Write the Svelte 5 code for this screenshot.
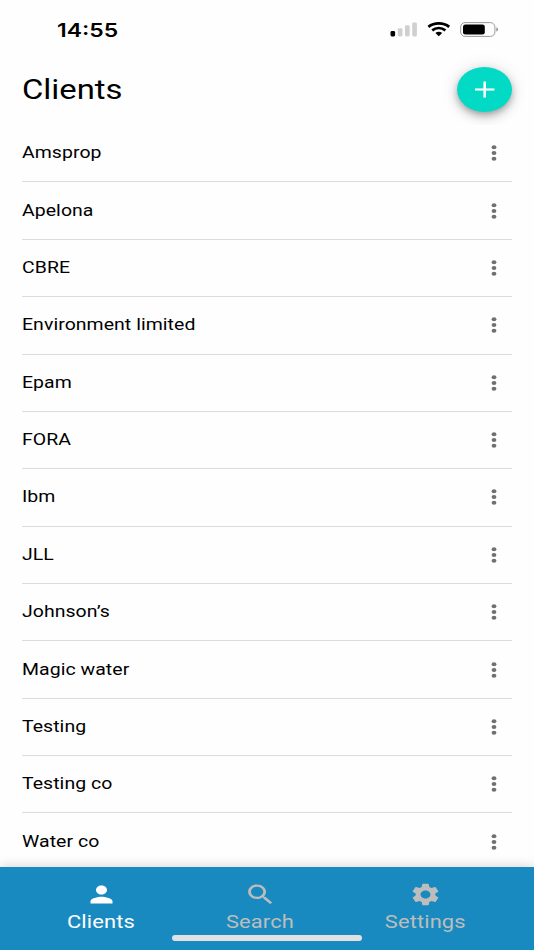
<script>
	let clients = [
		'Amsprop',
		'Apelona',
		'CBRE',
		'Environment limited',
		'Epam',
		'FORA',
		'Ibm',
		'JLL',
		'Johnson’s',
		'Magic water',
		'Testing',
		'Testing co',
		'Water co'
	];

	const tabs = [
		{
			label: 'Clients',
			icon: 'M12 12c2.21 0 4-1.79 4-4s-1.79-4-4-4-4 1.79-4 4 1.79 4 4 4zm0 2c-2.67 0-8 1.34-8 4v2h16v-2c0-2.66-5.33-4-8-4z'
		},
		{
			label: 'Search',
			icon: 'M15.5 14h-.79l-.28-.27C15.41 12.59 16 11.11 16 9.5 16 5.91 13.09 3 9.5 3S3 5.91 3 9.5 5.91 16 9.5 16c1.61 0 3.09-.59 4.23-1.57l.27.28v.79l5 4.99L20.49 19l-4.99-5zm-6 0C7.01 14 5 11.99 5 9.5S7.01 5 9.5 5 14 7.01 14 9.5 11.99 14 9.5 14z'
		},
		{
			label: 'Settings',
			icon: 'M19.14 12.94c.04-.3.06-.61.06-.94 0-.32-.02-.64-.07-.94l2.03-1.58c.18-.14.23-.41.12-.61l-1.92-3.32c-.12-.22-.37-.29-.59-.22l-2.39.96c-.5-.38-1.03-.7-1.62-.94l-.36-2.54c-.04-.24-.24-.41-.48-.41h-3.84c-.24 0-.43.17-.47.41l-.36 2.54c-.59.24-1.13.57-1.62.94l-2.39-.96c-.22-.08-.47 0-.59.22L2.74 8.87c-.12.21-.08.47.12.61l2.03 1.58c-.05.3-.09.63-.09.94s.02.64.07.94l-2.03 1.58c-.18.14-.23.41-.12.61l1.92 3.32c.12.22.37.29.59.22l2.39-.96c.5.38 1.03.7 1.62.94l.36 2.54c.05.24.24.41.48.41h3.84c.24 0 .44-.17.47-.41l.36-2.54c.59-.24 1.13-.56 1.62-.94l2.39.96c.22.08.47 0 .59-.22l1.92-3.32c.12-.22.07-.47-.12-.61l-2.01-1.58zM12 15.6c-1.98 0-3.6-1.62-3.6-3.6s1.62-3.6 3.6-3.6 3.6 1.62 3.6 3.6-1.62 3.6-3.6 3.6z'
		}
	];

	let active = 'Clients';
</script>

<div class="screen">
	<div class="status-bar">
		<span class="time">14:55</span>
		<svg class="status-icons" width="110" height="20" viewBox="0 0 110 20" aria-hidden="true">
			<rect x="0.5" y="11" width="4.6" height="5.4" rx="1.4" fill="#000" />
			<g fill="#d0d0d0">
				<rect x="7.8" y="8.3" width="4.7" height="8.1" rx="1.4" />
				<rect x="15" y="5.2" width="4.7" height="11.2" rx="1.4" />
				<rect x="22.2" y="2.4" width="4.7" height="14" rx="1.4" />
			</g>
			<g fill="none" stroke="#000" stroke-width="2.8">
				<path d="M38.4 6.8C44.3 2.2 53.3 2.2 59.2 6.8" />
				<path d="M42.2 10.3C46.2 7.3 51.4 7.3 55.4 10.3" />
			</g>
			<path d="M45.4 12.9c2-1.5 4.8-1.5 6.8 0l-3.4 3.3z" fill="#000" />
			<rect x="70.7" y="2.6" width="34.2" height="13.8" rx="4.4" fill="none" stroke="#999" />
			<rect x="73" y="4.4" width="21.8" height="10.2" rx="2.4" fill="#000" />
			<path d="M106.4 7.2c2.1.8 2.1 3.6 0 4.4z" fill="#888" />
		</svg>
	</div>

	<header>
		<h1>Clients</h1>
		<button class="fab" type="button" aria-label="Add client">
			<svg width="20" height="17" viewBox="0 0 20 17" aria-hidden="true">
				<path d="M0 8.5h19.4" stroke="#fff" stroke-width="2.1" />
				<path d="M9.7 0.5v16" stroke="#fff" stroke-width="2.6" />
			</svg>
		</button>
	</header>

	<ul>
		{#each clients as client}
			<li>
				<span class="name">{client}</span>
				<button class="more" type="button" aria-label="More">
					<svg width="6" height="16" viewBox="0 0 6 16" fill="#707070" aria-hidden="true">
						<ellipse cx="3" cy="2.3" rx="2.4" ry="2" />
						<ellipse cx="3" cy="8" rx="2.4" ry="2" />
						<ellipse cx="3" cy="13.7" rx="2.4" ry="2" />
					</svg>
				</button>
			</li>
		{/each}
	</ul>

	<nav>
		{#each tabs as tab}
			<button class="tab" type="button" class:active={active === tab.label} on:click={() => (active = tab.label)}>
				<svg width="33" height="27" viewBox="0 0 24 24" preserveAspectRatio="none" aria-hidden="true">
					<path d={tab.icon} fill="currentColor" />
				</svg>
				<span>{tab.label}</span>
			</button>
		{/each}
		<div class="home-indicator"></div>
	</nav>
</div>

<style>
	:global(body) {
		background: #fff;
		overflow: hidden;
	}
	.screen {
		width: 534px;
		height: 950px;
		display: flex;
		flex-direction: column;
		overflow: hidden;
		font-family: Roboto, sans-serif;
		color: #000;
		background: #fefefe;
	}
	button {
		border: 0;
		padding: 0;
		background: none;
		font: inherit;
		cursor: pointer;
	}
	.status-bar {
		height: 60px;
		flex: none;
		box-sizing: border-box;
		padding: 20px 34px 0 57px;
		display: flex;
		justify-content: space-between;
		align-items: flex-start;
	}
	.time {
		font-family: Inter, sans-serif;
		font-size: 18.5px;
		line-height: 20px;
		font-weight: 600;
		transform: scaleX(1.24);
		transform-origin: left;
	}
	header {
		height: 65.1px;
		flex: none;
		box-sizing: border-box;
		padding: 6.5px 22px 0 22px;
		display: flex;
		justify-content: space-between;
		align-items: flex-start;
	}
	h1 {
		margin: 0;
		font-size: 27px;
		line-height: 46px;
		font-weight: 400;
		transform: scaleX(1.215);
		transform-origin: left;
	}
	.fab {
		width: 55px;
		height: 45px;
		border-radius: 50%;
		background: #03dac6;
		display: flex;
		align-items: center;
		justify-content: center;
		box-shadow: 0 3px 6px -1px rgba(0, 0, 0, 0.24), 0 5px 11px rgba(0, 0, 0, 0.16), 0 1px 18px rgba(0, 0, 0, 0.12);
	}
	ul {
		flex: 1;
		min-height: 0;
		margin: 0;
		padding: 0 22px;
		list-style: none;
		background: #fefefe;
		position: relative;
	}
	li {
		height: 57.37px;
		box-sizing: border-box;
		border-bottom: 1px solid #dcdcdc;
		display: flex;
		align-items: center;
		justify-content: space-between;
	}
	.name {
		font-size: 16px;
		line-height: 20px;
		letter-spacing: 0.05px;
		transform: scaleX(1.215);
		transform-origin: left;
	}
	.more {
		width: 36px;
		height: 30px;
		display: flex;
		align-items: center;
		justify-content: center;
	}
	nav {
		height: 83px;
		flex: none;
		box-sizing: border-box;
		padding: 14px 22px 0;
		display: grid;
		grid-template-columns: 158px 160px 171px;
		position: relative;
		background: #198abf;
		box-shadow: 0 -1px 10px rgba(0, 0, 0, 0.16);
	}
	.tab {
		height: 55px;
		display: flex;
		flex-direction: column;
		align-items: center;
		color: #bdbdbd;
	}
	.tab.active {
		color: #fff;
	}
	.tab span {
		font-size: 18px;
		line-height: 27px;
		letter-spacing: 0.1px;
		transform: scaleX(1.215);
	}
	.home-indicator {
		position: absolute;
		left: 172px;
		bottom: 9px;
		width: 190px;
		height: 6px;
		border-radius: 3px;
		background: #e1e1e4;
	}
</style>
